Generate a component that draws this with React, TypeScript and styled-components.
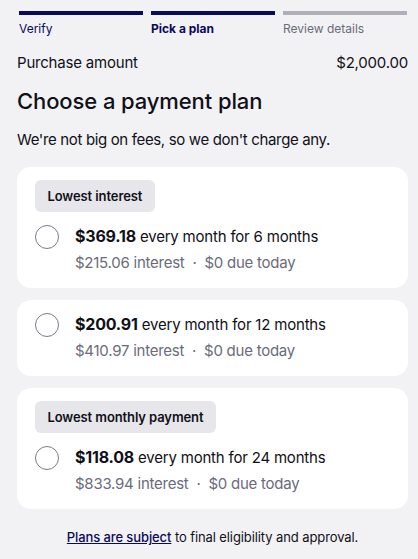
import React from "react";
import styled, { createGlobalStyle } from "styled-components";

const Global = createGlobalStyle`
  html, body {
    margin: 0;
    padding: 0;
    background: #f2f2f5;
  }
  body {
    font-family: Inter, "Noto Sans", "Liberation Sans", sans-serif;
    color: #101018;
  }
`;

const Page = styled.div`
  padding: 11px 10px 0 17px;
`;

const Stepper = styled.div`
  display: grid;
  grid-template-columns: repeat(3, 1fr);
  gap: 8px;
  padding: 0 1px 0 2px;
`;

const Step = styled.div<{ $state: "done" | "active" | "todo" }>`
  border-top: 4px solid ${(p) => (p.$state === "todo" ? "#afafb9" : "#0a0a5c")};
  padding-top: 6px;
  font-size: 12px;
  line-height: 16px;
  font-weight: ${(p) => (p.$state === "active" ? 700 : 400)};
  color: ${(p) => (p.$state === "todo" ? "#6a6a78" : "#0a0a5c")};
`;

const AmountRow = styled.div`
  display: flex;
  justify-content: space-between;
  margin-top: 16px;
  font-size: 15px;
  line-height: 20px;
  letter-spacing: -0.2px;
`;

const Heading = styled.h1`
  margin: 14px 0 0;
  font-size: 22px;
  line-height: 28px;
  font-weight: 500;
  letter-spacing: -0.1px;
`;

const Sub = styled.p`
  margin: 15px 0 0;
  font-size: 15px;
  line-height: 20px;
  letter-spacing: -0.35px;
`;

const Cards = styled.div`
  display: flex;
  flex-direction: column;
  gap: 12px;
  margin-top: 17px;
`;

const Card = styled.div`
  background: #ffffff;
  border-radius: 14px;
  padding: 13px 18px 14px;
  display: flex;
  flex-direction: column;
  gap: 13px;
`;

const Badge = styled.span`
  align-self: flex-start;
  background: #e6e6eb;
  border-radius: 6px;
  padding: 0 12.5px;
  height: 32px;
  display: flex;
  align-items: center;
  font-size: 13px;
  font-weight: 600;
  letter-spacing: -0.1px;
`;

const Row = styled.div`
  display: flex;
  gap: 16px;
  align-items: flex-start;
`;

const Radio = styled.span`
  flex: 0 0 auto;
  width: 24px;
  height: 24px;
  box-sizing: border-box;
  border: 1.5px solid #7a7a86;
  border-radius: 50%;
`;

const Info = styled.div`
  display: flex;
  flex-direction: column;
  gap: 4px;
`;

const Main = styled.div`
  font-size: 15px;
  line-height: 22px;
  letter-spacing: -0.2px;
  b {
    font-size: 16px;
    font-weight: 700;
  }
`;

const Detail = styled.div`
  font-size: 15px;
  line-height: 22px;
  letter-spacing: -0.25px;
  color: #6b6b7b;
`;

const Footer = styled.p`
  margin: 19px 0 0;
  text-align: center;
  font-size: 13px;
  line-height: 18px;
  letter-spacing: -0.1px;
  a {
    color: #0a0a5c;
    font-weight: 500;
    text-decoration: underline;
  }
`;

type Plan = {
  badge?: string;
  monthly: string;
  months: number;
  interest: string;
};

const plans: Plan[] = [
  { badge: "Lowest interest", monthly: "$369.18", months: 6, interest: "$215.06" },
  { monthly: "$200.91", months: 12, interest: "$410.97" },
  { badge: "Lowest monthly payment", monthly: "$118.08", months: 24, interest: "$833.94" },
];

export default function App() {
  return (
    <>
      <Global />
      <Page>
        <Stepper>
          <Step $state="done">Verify</Step>
          <Step $state="active">Pick a plan</Step>
          <Step $state="todo">Review details</Step>
        </Stepper>
        <AmountRow>
          <span>Purchase amount</span>
          <span>$2,000.00</span>
        </AmountRow>
        <Heading>Choose a payment plan</Heading>
        <Sub>We're not big on fees, so we don't charge any.</Sub>
        <Cards>
          {plans.map((p) => (
            <Card key={p.months}>
              {p.badge && <Badge>{p.badge}</Badge>}
              <Row>
                <Radio />
                <Info>
                  <Main>
                    <b>{p.monthly}</b> every month for {p.months} months
                  </Main>
                  <Detail>
                    {p.interest} interest &nbsp;·&nbsp; $0 due today
                  </Detail>
                </Info>
              </Row>
            </Card>
          ))}
        </Cards>
        <Footer>
          <a href="#">Plans are subject</a> to final eligibility and approval.
        </Footer>
      </Page>
    </>
  );
}
